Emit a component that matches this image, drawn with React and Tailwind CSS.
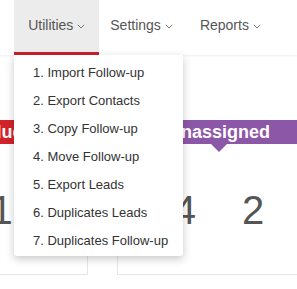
const menuItems = [
  "1. Import Follow-up",
  "2. Export Contacts",
  "3. Copy Follow-up",
  "4. Move Follow-up",
  "5. Export Leads",
  "6. Duplicates Leads",
  "7. Duplicates Follow-up",
];

function Chevron() {
  return (
    <svg width="8" height="5" viewBox="0 0 8 5" className="ml-[4px] mt-[2px] shrink-0" aria-hidden="true">
      <path d="M0.8 0.8 L4 4 L7.2 0.8" fill="none" stroke="#777" strokeWidth="1" />
    </svg>
  );
}

function NavTab({ label, active, className = "" }) {
  return (
    <div
      className={`relative flex h-[55px] items-center px-[14px] text-[14px] text-[#555] ${
        active ? "bg-[#ececec]" : ""
      } ${className}`}
    >
      <span className="-mt-[4px] flex items-center">
        {label}
        <Chevron />
      </span>
      {active && <div className="absolute bottom-0 left-0 h-[3px] w-full bg-[#c8232c]" />}
    </div>
  );
}

function StatCard({ title, color, tip, numbers, className = "", rowClass = "" }) {
  return (
    <div className={`w-[204px] shrink-0 border-x border-b border-[#e6e6e6] pb-[44px] ${className}`}>
      <div className={`relative flex h-[24px] items-center justify-center text-[18px] font-bold text-white ${color}`}>
        {title}
        <div
          className={`absolute left-1/2 top-full h-0 w-0 -translate-x-1/2 border-x-[8px] border-t-[8px] border-x-transparent ${tip}`}
        />
      </div>
      <div className={`mt-[46px] flex h-[40px] items-center text-[40px] leading-[40px] text-[#555] ${rowClass}`}>
        {numbers.map((n, i) => (
          <span key={i}>{n}</span>
        ))}
      </div>
    </div>
  );
}

export default function App() {
  return (
    <div className="relative h-[289px] w-[297px] overflow-hidden bg-white font-['Liberation_Sans',Arial,sans-serif]">
      <nav className="relative z-10 flex h-[55px] bg-white shadow-[0_1px_2px_rgba(0,0,0,0.08)]">
        <NavTab label="Leads" className="-ml-[68px] pr-[18px]" />
        <NavTab label="Utilities" active />
        <NavTab label="Settings" className="pl-[11px]" />
        <NavTab label="Reports" className="pl-[13px]" />
      </nav>

      <div className="flex pt-[65px]">
        <StatCard
          title="Overdue"
          color="bg-[#d2232a]"
          tip="border-t-[#d2232a]"
          numbers={["1", "1"]}
          className="-ml-[116px]"
          rowClass="justify-end pr-[52px]"
        />
        <StatCard
          title="Unassigned"
          color="bg-[#8d57a8]"
          tip="border-t-[#8d57a8]"
          numbers={["4", "2"]}
          className="ml-[29px]"
          rowClass="justify-center gap-[46px]"
        />
      </div>

      <div className="absolute left-[14px] top-[55px] z-20 w-[169px] rounded-b-[3px] bg-white pb-[1px] pt-[4px] shadow-[0_3px_8px_rgba(0,0,0,0.22)]">
        {menuItems.map((item) => (
          <div key={item} className="flex h-[28px] items-center pl-[19px] text-[13px] text-[#333]">
            {item}
          </div>
        ))}
      </div>
    </div>
  );
}
